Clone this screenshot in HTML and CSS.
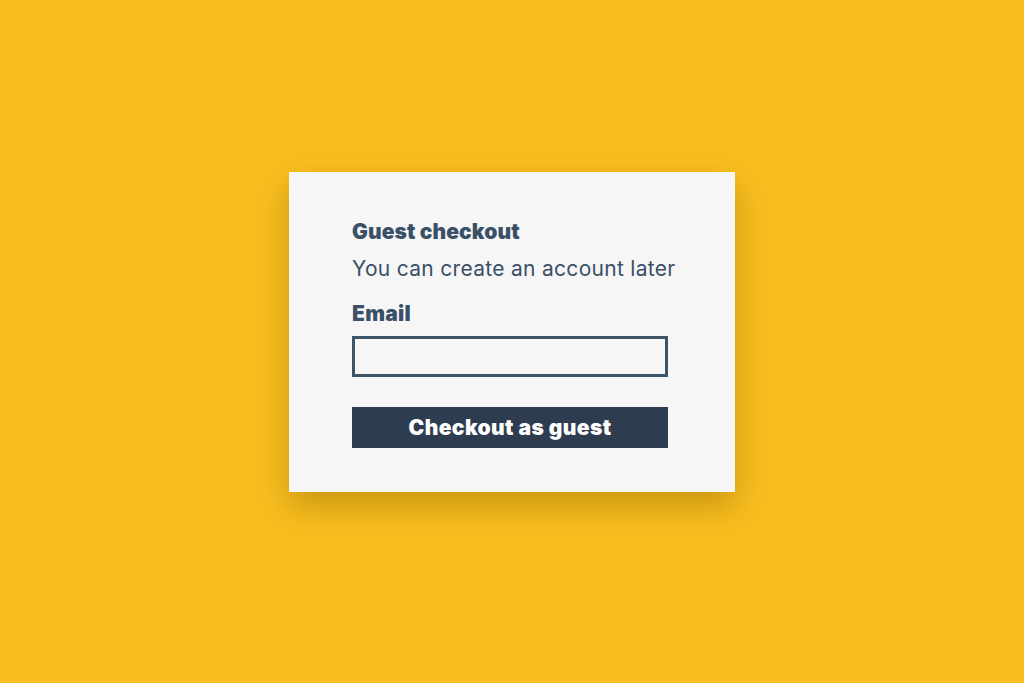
FILE: index.html
```html
<!DOCTYPE html>
<html lang="en">
    <head>
        <title>Guest checkout</title>
        <meta charset="utf-8" />
        <meta name="viewport" content="width=device-width, initial-scale=1">
        <link rel="stylesheet" href="styles.css">
    </head>
    <body>
        <div class="page">
            <form class="card">
                <h2 class="title">Guest checkout</h2>
                <p class="subtitle">You can create an account later</p>
                <label class="label" for="email">Email</label>
                <input class="field" id="email" type="email">
                <button class="submit" type="button">Checkout as guest</button>
            </form>
        </div>
    </body>
</html>
```

FILE: styles.css
```css
html, body {
    margin: 0;
    height: 100%;
}
body {
    background-color: #f8bd1e;
    font-family: Inter, "Noto Sans", sans-serif;
    color: #3a5067;
}
.page {
    height: 100%;
    display: flex;
    justify-content: center;
    align-items: flex-start;
    padding-top: 172px;
    box-sizing: border-box;
}
.card {
    width: 446px;
    height: 320px;
    box-sizing: border-box;
    padding: 47px 67px 0 63px;
    background-color: #f6f6f7;
    box-shadow: 0 14px 30px rgba(120, 80, 0, 0.35);
    display: flex;
    flex-direction: column;
}
.title {
    margin: 0;
    font-size: 21px;
    font-weight: 900;
    line-height: 26px;
    letter-spacing: 0.1px;
}
.subtitle {
    margin: 11px 0 0;
    font-size: 21px;
    font-weight: 400;
    line-height: 26px;
    letter-spacing: 0.3px;
    white-space: nowrap;
}
.label {
    margin-top: 19px;
    font-size: 21px;
    font-weight: 900;
    line-height: 26px;
    letter-spacing: 0.3px;
}
.field {
    margin-top: 9px;
    height: 41px;
    width: 316px;
    box-sizing: border-box;
    border: 3px solid #3d5568;
    background-color: #f6f6f7;
    outline: none;
}
.submit {
    margin-top: 30px;
    height: 41px;
    width: 316px;
    border: 0;
    background-color: #2d3d4f;
    color: #ffffff;
    font-family: inherit;
    font-size: 21px;
    font-weight: 900;
    letter-spacing: 0.4px;
}
```
